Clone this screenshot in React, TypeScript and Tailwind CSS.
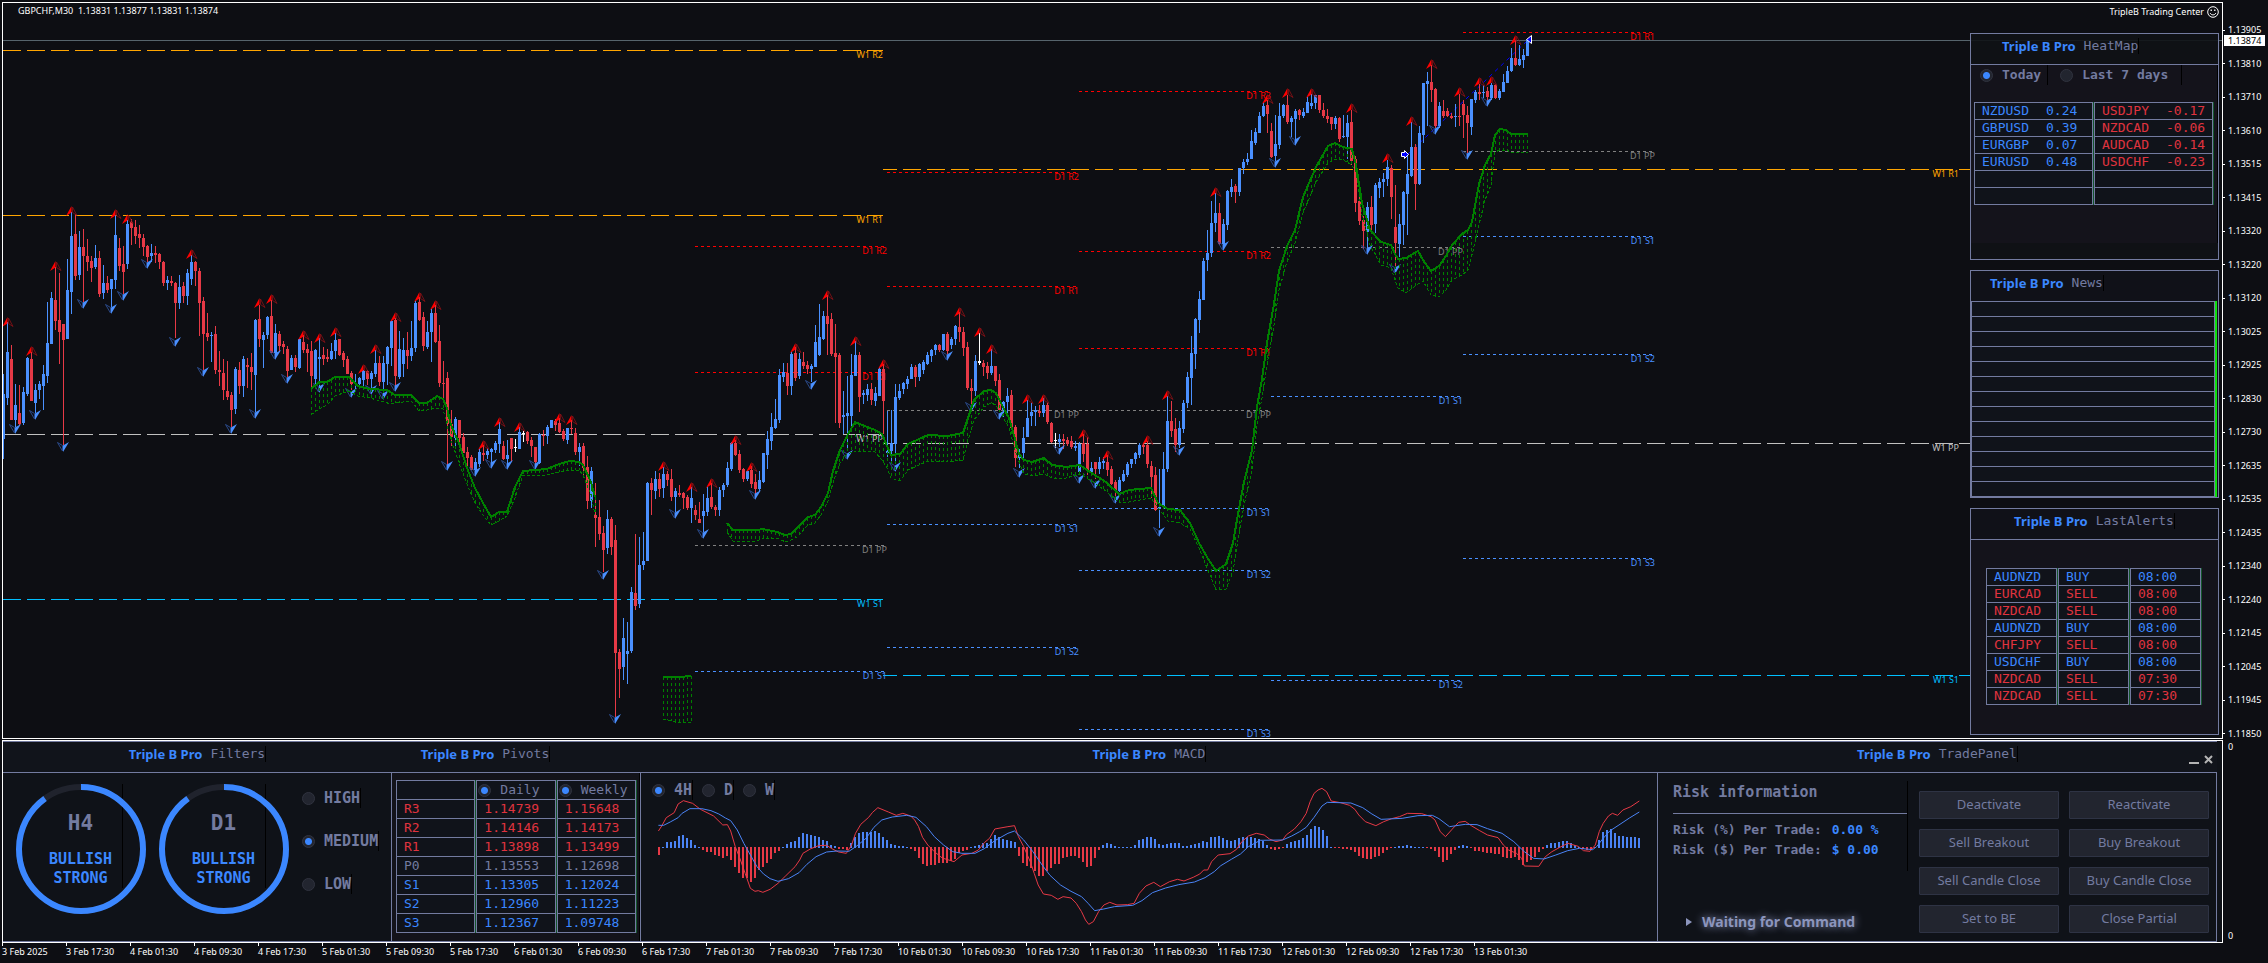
import React from "react";

type Side = "B" | "R" | "W";
type Candle = { i: number; high: number; low: number; top: number; bottom: number; side: Side };

const CANDLE_COLOR: Record<Side, string> = { B: "#4a90ff", R: "#e63946", W: "#ffffff" };
const SANS = "font-['Noto_Sans','Open_Sans',sans-serif]";
const MONO = "font-['DejaVu_Sans_Mono','Liberation_Mono',monospace]";

// Each block: index of its first candle, top offset, units per pixel, then "high low open/close side".
const BLOCKS: { start: number; y: number; unit: number; rows: string }[] = [
  {
    start: 0, y: 190, unit: 3,
    rows: "552 806 612 747 B,395 644 486 624 B,465 690 507 690 R,582 712 645 690 B,585 708 669 702 R,591 705 606 699 B,500 618 504 612 B,486 633 507 633 R,582 668 600 639 B,573 627 582 600 B,525 660 552 588 B,336 579 459 558 B,306 462 324 462 B,230 420 330 393 R,249 522 390 426 R,402 765 402 450 R,207 447 300 447 B,65 372 138 306 B,72 270 132 258 R,123 270 171 255 B,117 335 171 198 R,147 243 198 216 R,198 276 213 234 R,165 237 204 231 B,183 321 204 312 R,225 327 279 309 B,258 309 279 300 R,267 350 267 297 B,75 297 135 270 B,144 243 174 228 R,168 312 222 246 R,90 237 102 222 B,87 165 96 114 R,90 162 111 138 R,105 174 132 144 R,132 198 144 171 R,165 216 168 201 R,162 216 189 198 B,168 219 189 195 R,189 237 192 216 R,213 288 216 279 R,258 300 270 279 B,258 288 273 279 R,276 445 279 339 R,255 357 291 339 B,276 339 288 318 R,237 345 249 318 B,195 285 216 267 B,213 288 216 243 R,234 438 243 339 R,321 540 333 432 R,369 453 429 441 R,426 516 435 438 B,408 552 432 540 R,483 588 540 546 R,507 630 549 600 R,513 630 603 621 R,606 710 615 660 R,531 672 537 657 B,516 612 540 588 R,498 621 507 588 B,504 594 525 531 R,489 600 531 546 R,387 665 390 555 B,345 471 387 447 R,426 534 435 450 B,378 447 381 435 B,330 489 378 489 R,402 495 429 489 B,423 486 432 468 R,453 492 462 471 R,468 560 477 543 R,495 540 504 540 B,495 546 504 531 R,447 537 447 534 B,435 489 456 480 R,462 546 477 489 R,453 600 483 558 R,477 582 480 567 B,445 595 501 507 B,471 525 495 507 R,477 516 501 507 R,459 510 483 507 B,430 507 450 483 B,447 498 447 495 R,483 531 489 510 R,498 552 507 552 R,543 600 549 582 R,552 597 579 582 B,561 588 564 582 B,540 588 543 570 B,540 585 543 567 R,543 600 549 567 B,480 561 519 552 B,498 588 519 576 R,498 615 519 576 B,468 585 471 522 B,390 528 393 474 B,385 590 390 558 R,423 567 477 561 B,444 561 480 522 B,426 537 480 498 R,393 513 474 498 B,333 486 339 474 B,320 393 336 390 R,366 483 381 468 R,393 477 426 471 B,357 516 369 426 B,345 459 369 456 R,405 591 453 579 R,513 624 579 582 R,546 825 564 702 R,660 768 702 741 R,681 771 687 744 B",
  },
  {
    start: 114, y: 380, unit: 3,
    rows: "120 201 120 174 R,159 219 171 219 R,201 264 216 234 R,225 270 231 270 R,234 280 246 270 B,207 262 216 252 B,195 243 219 225 R,204 237 213 225 B,204 250 207 216 B,183 219 189 210 B,125 219 147 192 B,183 240 198 237 R,180 255 225 237 B,174 246 174 207 R,177 216 200 203 W,140 207 156 207 B,153 186 158 162 W,153 192 156 183 R,171 231 180 198 R,201 260 201 246 R,159 252 162 249 B,150 198 165 168 R,135 192 141 168 B,120 144 120 144 B,117 153 123 135 R,115 159 129 156 R,147 183 153 177 R,144 192 144 180 B,120 162 144 147 R,144 225 159 216 R,189 258 201 216 B,189 294 198 264 R,228 387 261 363 R,261 384 273 363 B,309 501 405 414 R,360 480 411 462 R,438 575 459 510 R,390 522 417 504 B,411 525 417 501 R,435 1010 480 819 R,807 954 816 867 R,714 900 774 861 B,726 912 813 822 B,621 819 636 813 B,462 690 639 678 R,471 684 555 672 B,456 570 543 555 B,306 543 309 543 B,294 405 309 330 R,273 357 297 333 B,279 351 297 327 R,260 354 282 324 B,273 318 282 300 R,267 363 297 351 R,324 395 333 351 B,315 351 339 345 R,336 387 339 354 R,345 390 351 384 R,320 429 354 384 B,375 420 390 405 R,366 429 417 429 R,342 455 393 408 B,321 408 354 396 B,308 387 351 381 R,375 408 381 390 R,321 408 330 390 B,309 351 315 330 B,246 321 264 315 B,186 273 189 267 B,180 228 189 225 R,210 279 222 270 R,264 306 267 297 R,270 303 273 297 B,258 324 270 312 R,282 345 306 327 R,273 336 300 327 B,219 309 219 306 B,153 267 177 225 B,99 210 141 183 B",
  },
  {
    start: 193, y: 200, unit: 2.8,
    rows: "558 640 612 637 B,472 624 490 615 B,455 510 482 496 B,456 546 484 521 R,426 546 431 521 B,412 507 429 498 R,428 501 445 493 B,426 473 453 464 R,451 487 462 473 R,459 510 464 473 B,350 467 398 467 B,291 437 384 434 B,311 392 325 389 B,265 434 325 348 R,317 437 333 431 R,347 624 428 440 R,428 637 434 624 R,535 655 602 607 B,493 703 597 605 B,432 635 490 605 B,396 493 434 493 B,426 594 434 552 R,532 572 541 546 B,515 563 529 546 B,513 574 529 560 R,524 577 541 563 B,468 549 473 549 B,460 655 473 563 R,591 719 704 707 B,588 730 680 704 B,515 735 552 683 B,515 560 535 554 B,510 543 513 529 B,493 529 501 515 B,459 501 468 501 B,462 524 467 496 R,456 507 459 496 B,448 487 454 476 B,425 462 434 459 B,417 454 420 437 B,403 434 406 420 B,403 426 406 420 R,375 423 375 420 B,370 430 375 423 R,384 417 389 406 B,350 406 353 389 B,313 398 356 370 R,356 437 370 414 R,398 532 412 526 R,501 575 526 535 R,434 549 451 535 B,372 462 451 455 W,448 493 456 467 R,454 501 465 484 R,418 490 465 484 B,465 521 465 507 R,487 594 504 588 R,562 608 566 588 B,526 598 549 566 B,532 644 546 638 R,630 747 636 722 R,697 750 715 722 B,636 725 666 708 B,560 663 610 663 B,568 633 594 605 B,577 633 589 594 B,574 608 591 596 R,555 608 574 596 B,568 627 574 622 R,622 680 624 678 R,652 694 672 676 W,655 692 669 678 B,655 697 669 675 R,664 689 672 683 R,661 697 675 692 R,675 703 689 694 B,678 770 683 762 B,655 734 680 711 R,664 770 683 756 R,734 764 750 762 B,734 780 734 753 R,720 767 734 753 B",
  },
  {
    start: 275, y: 0, unit: 2.613,
    rows: "1195 1225 1205 1209 B,1190 1245 1207 1228 R,1217 1268 1226 1265 R,1255 1300 1260 1283 R,1247 1286 1254 1283 B,1228 1260 1239 1257 B,1207 1247 1213 1242 B,1199 1223 1200 1213 B,1181 1213 1184 1200 B,1158 1197 1163 1189 B,1160 1187 1163 1168 R,1152 1223 1163 1213 R,1205 1300 1217 1247 R,1220 1335 1241 1333 R,1226 1380 1325 1330 B,1180 1330 1226 1326 B,1035 1233 1100 1226 B,1048 1143 1100 1125 R,1092 1180 1121 1163 R,1100 1170 1118 1163 B,1045 1132 1053 1120 B,972 1065 985 1053 B,878 1058 923 988 B,830 965 834 925 B,760 870 782 836 B,673 783 682 783 B,601 707 660 679 B,525 672 583 661 B,505 605 557 583 B,531 640 557 637 R,573 640 586 637 B,496 600 499 588 B,468 515 488 502 B,481 531 486 502 R,438 512 440 502 B,416 455 422 438 B,401 430 416 424 B,340 416 368 416 B,335 380 345 374 B,293 348 303 348 B,267 305 277 303 B,260 348 274 298 R,321 414 342 409 R,301 420 376 408 B,270 390 303 378 B,272 308 274 303 B,248 325 274 319 R,303 358 308 319 B,285 368 290 310 B,285 314 287 301 R,282 308 293 303 B,253 295 267 295 B,245 285 269 277 B,248 285 248 270 B,248 295 248 287 R,269 308 287 303 R,285 322 303 311 R,306 340 306 324 R,303 337 308 324 B,306 371 308 363 R,301 361 355 358 B,300 415 321 358 B,287 430 319 421 R,408 554 416 531 R,505 588 525 578 R,565 650 575 604 R,528 650 541 606 B,512 601 541 588 R,478 609 483 586 B,465 518 475 491 B,452 515 468 475 B,418 486 436 468 B,430 572 438 515 R,483 700 593 635 R,560 672 586 638 B,499 640 502 588 B,402 614 455 507 B,318 463 384 460 B,376 549 384 481 R,329 484 348 481 B,216 374 217 353 B,188 329 212 219 B,170 267 214 235 R,230 335 233 329 R,267 335 277 329 B,262 308 290 303 R,282 306 290 303 R,295 311 303 308 R,272 332 302 306 B,245 329 302 306 R,261 361 272 301 R,277 400 301 321 R,259 353 259 332 B,235 269 240 262 B,220 262 240 245 R,222 256 240 243 B,227 262 238 253 R,217 260 222 256 B,219 258 222 256 R,233 262 238 256 B,193 240 214 240 B,172 217 185 217 B,125 188 152 185 B,108 172 152 170 R,118 172 154 170 B,128 178 144 157 B,103 146 105 146 B",
  },
];

const CANDLES: Candle[] = BLOCKS.flatMap((b) =>
  b.rows.split(",").map((row, k) => {
    const p = row.split(" ");
    const at = (n: number) => Math.round(b.y + Number(p[n]) / b.unit);
    return { i: b.start + k, high: at(0), low: at(1), top: at(2), bottom: at(3), side: p[4] as Side };
  }),
);

const pairs = (s: string) => s.split(" ").map((p) => p.split(",").map(Number));

const PEAKS = pairs(
  "1,317 7,346 13,261 17,206 28,209 31,214 47,249 64,298 67,294 75,330 79,333 83,327 90,364 93,344 98,312 104,292 108,300 120,440 124,417 129,422 139,413 142,415 165,461 172,482 177,478 183,435 187,462 198,343 206,290 213,336 220,359 239,307 244,327 247,344 256,394 260,394 270,429 276,450 286,435 291,390 303,187 316,94 321,88 327,88 337,103 346,153 352,116 357,59 364,87 369,77 372,76 378,35",
);
const TROUGHS = pairs(
  "3,434 8,420 15,452 20,309 27,314 30,301 36,269 43,347 50,377 57,434 63,419 68,360 71,384 79,393 87,398 92,395 95,400 98,392 111,471 118,477 122,469 126,470 133,470 150,580 153,724 168,519 175,539 188,500 202,390 211,460 223,472 236,361 242,412 249,420 254,478 264,455 269,484 273,489 278,504 289,537 294,456 305,251 318,168 323,146 341,255 348,274 358,135 366,160 371,107",
);

// x, upper edge, lower edge
const RIBBONS = [
  "311,389,415 319,382,409 327,382,405 335,377,396 349,377,391 358,386,396 370,389,398 387,390,403 395,395,403 411,395,401 419,403,411 427,403,410 437,396,408 443,399,409 447,408,425 451,425,440 459,443,463 467,468,484 475,488,503 483,503,515 491,517,525 499,512,521 507,512,516 515,487,498 523,471,475 547,469,475 559,464,472 570,461,470 579,462,470 583,465,475 591,482,495 595,497,515",
  "663,677,719 671,677,721 675,677,722 683,677,722 687,676,722 691,676,722",
  "727,523,532 733,530,541 757,530,541 763,529,538 777,532,538 785,535,542 791,534,540 797,528,537 808,517,525 815,515,523 821,507,515 828,493,501 833,471,483 840,450,463 847,436,454 855,422,451 867,427,451 875,430,452 882,434,460 887,446,468 891,455,478 900,454,481 908,444,470 928,435,461 947,436,462 963,433,460 968,418,440 974,400,420 984,391,407 991,390,403 996,393,405 1003,407,417 1009,418,428 1015,439,450 1019,454,462 1024,460,474 1032,462,476 1044,458,474 1052,465,478 1066,467,478 1080,465,474 1090,472,480 1106,482,491 1119,494,503 1129,490,502 1151,488,498 1158,503,508 1168,509,521 1180,510,523 1190,523,529 1199,543,548 1207,557,568 1216,571,590 1226,564,589 1233,543,572 1238,514,540 1244,482,505 1252,450,470 1257,407,425 1262,379,398 1267,343,365 1274,304,325 1279,271,290 1287,246,262 1295,230,243 1303,197,213 1316,167,182 1328,146,163 1335,143,159 1343,147,160 1352,149,165 1356,165,172 1362,203,215 1370,230,245 1381,242,265 1391,245,268 1395,254,280 1398,259,288 1406,258,293 1418,251,284 1423,260,281 1431,271,295 1439,266,297 1446,256,290 1452,245,280 1462,234,275 1468,230,270 1472,222,255 1479,184,225 1485,165,200 1491,154,185 1495,135,152 1500,129,150 1506,130,150 1511,134,152 1528,134,152",
].map(pairs);

type Level = [string, number, string];
const ORANGE = "#ffa500", SILVER = "#c0c0c0", SKY = "#00bfff", RED = "#ff0000", GRAY = "#808080", BLUE = "#4a90ff";
const WEEKLY: { x1: number; x2: number; label: number; levels: Level[] }[] = [
  { x1: 3, x2: 883, label: 883, levels: [["W1 R2", 50, ORANGE], ["W1 R1", 215, ORANGE], ["W1 PP", 434, SILVER], ["W1 S1", 599, SKY]] },
  { x1: 883, x2: 1970, label: 1959, levels: [["W1 R1", 169, ORANGE], ["W1 PP", 443, SILVER], ["W1 S1", 675, SKY]] },
];
const DAILY: { x: number; levels: Level[] }[] = [
  { x: 695, levels: [["D1 R2", 246, RED], ["D1 R1", 372, RED], ["D1 PP", 545, GRAY], ["D1 S1", 671, BLUE]] },
  { x: 887, levels: [["D1 R2", 172, RED], ["D1 R1", 286, RED], ["D1 PP", 410, GRAY], ["D1 S1", 524, BLUE], ["D1 S2", 647, BLUE]] },
  { x: 1079, levels: [["D1 R3", 91, RED], ["D1 R2", 251, RED], ["D1 R1", 348, RED], ["D1 PP", 410, GRAY], ["D1 S1", 508, BLUE], ["D1 S2", 570, BLUE], ["D1 S3", 729, BLUE]] },
  { x: 1271, levels: [["D1 PP", 247, GRAY], ["D1 S1", 396, BLUE], ["D1 S2", 680, BLUE]] },
  { x: 1463, levels: [["D1 R1", 32, RED], ["D1 PP", 151, GRAY], ["D1 S1", 236, BLUE], ["D1 S2", 354, BLUE], ["D1 S3", 558, BLUE]] },
];

function ribbonAt(r: number[][], x: number) {
  for (let k = 1; k < r.length; k++) {
    if (x <= r[k][0]) {
      const [x0, u0, l0] = r[k - 1];
      const [x1, u1, l1] = r[k];
      const t = (x - x0) / (x1 - x0);
      return [u0 + (u1 - u0) * t, l0 + (l1 - l0) * t];
    }
  }
  return [r[r.length - 1][1], r[r.length - 1][2]];
}

function Ribbon({ points }: { points: number[][] }) {
  const first = points[0][0];
  const last = points[points.length - 1][0];
  const xs: number[] = [];
  for (let x = first; x <= last; x += 4) xs.push(x);
  return (
    <g stroke="#008000" fill="none" shapeRendering="crispEdges">
      {xs.map((x) => {
        const [u, l] = ribbonAt(points, x);
        return <line key={x} x1={x + 0.5} x2={x + 0.5} y1={Math.round(u)} y2={Math.round(l)} strokeDasharray="3 3" />;
      })}
      <polyline points={points.map((p) => `${p[0]},${p[2]}`).join(" ")} strokeDasharray="3 2" />
      <polyline points={points.map((p) => `${p[0]},${p[1]}`).join(" ")} strokeWidth="2" />
    </g>
  );
}

function PriceChart() {
  return (
    <svg className="absolute inset-0 h-full w-full" role="img" aria-label="GBPCHF price chart">
      <g transform="translate(-3 -3)">
        <rect x="3" y="40" width="100%" height="1" fill="#56646c" />
        {WEEKLY.map((w) =>
          w.levels.map(([name, y, color]) => (
            <g key={w.x1 + name}>
              <line x1={w.x1} x2={w.x2} y1={y + 0.5} y2={y + 0.5} stroke={color} strokeDasharray="18 6" strokeDashoffset={w.x1 === 3 ? 0 : 4} />
              <text x={w.label} y={y + 8} fill={color} textAnchor="end" className={`text-[9px] ${SANS}`}>{name}</text>
            </g>
          )),
        )}
        {DAILY.map((d) =>
          d.levels.map(([name, y, color]) => (
            <g key={d.x + name}>
              <line x1={d.x} x2={d.x + 190} y1={y + 0.5} y2={y + 0.5} stroke={color} strokeDasharray="3 3" />
              <text x={d.x + 192} y={y + 8} fill={color} textAnchor="end" className={`text-[9px] ${SANS}`}>{name}</text>
            </g>
          )),
        )}
        <line x1="1408" y1="154" x2="1527" y2="41" stroke="#0000ff" strokeDasharray="4 4" />
        {CANDLES.map((c) => (
          <g key={c.i} fill={CANDLE_COLOR[c.side]}>
            <rect x={3 + c.i * 4} y={c.high} width="1" height={Math.max(1, c.low - c.high)} />
            <rect x={2 + c.i * 4} y={c.top} width="3" height={Math.max(1, c.bottom - c.top)} />
          </g>
        ))}
        {PEAKS.map(([i, y]) => (
          <g key={i} transform={`translate(${i * 4 + 3.5} ${y})`}>
            <path d="M0 0V6.500L-5.500 10Z" fill="#ff0000" />
            <path d="M1 1L5.500 9.500L1 6.500Z" fill="none" stroke="#8b1015" strokeWidth="0.8" />
          </g>
        ))}
        {TROUGHS.map(([i, y]) => (
          <g key={i} transform={`translate(${i * 4 + 3} ${y})`}>
            <path d="M0 0V-6.500L6 -10Z" fill="#4a90ff" />
            <path d="M-0.500 -1L-5.500 -9.500L-0.500 -6.500Z" fill="none" stroke="#2c4f95" strokeWidth="0.9" />
          </g>
        ))}
        {RIBBONS.map((r) => <Ribbon key={r[0][0]} points={r} />)}
        <path d="M1401.500 152.500H1404.500V150.500L1408.500 154.500L1404.500 158.500V156.500H1401.500Z" fill="#0000ff" stroke="#fff" />
        <path d="M1531.500 35.500V43.500L1526.500 39.500Z" fill="#0000ff" stroke="#fff" />
      </g>
    </svg>
  );
}

function Title({ name, className = "" }: { name: string; className?: string }) {
  return (
    <h2 className={`flex items-center gap-2 whitespace-nowrap ${className}`}>
      <span className={`${SANS} text-[13px] leading-4 font-bold text-[#3b87ff]`}>Triple B Pro</span>
      <span className={`${MONO} border-r border-black text-[13px] leading-4 text-[#737ba0]`}>{name}</span>
    </h2>
  );
}

type RadioProps = { name: string; label: string; checked?: boolean; type?: string; className: string };
function Choice({ name, label, checked, type = "radio", className }: RadioProps) {
  return (
    <label className={`flex items-center gap-[9px] whitespace-nowrap text-[#737ba0] ${MONO} ${className}`}>
      <input
        type={type}
        name={name}
        defaultChecked={checked}
        className="size-[13px] shrink-0 appearance-none rounded-full border border-[#30333f] bg-[#22252f] checked:bg-[radial-gradient(circle,#3b87ff_3px,#22252f_4px)]"
      />
      {label}
    </label>
  );
}

const TONE: Record<string, string> = { up: "text-[#3b87ff]", down: "text-[#e0333f]", flat: "text-[#737ba0]" };
const CELL = "border-r border-b border-l border-[#737ba0] bg-[#10131a] shadow-[1px_0_0_#14562c] p-0 pl-[7px] text-left font-normal";

const HEAT: [string, string, string, string][] = [
  ["NZDUSD", "0.24", "USDJPY", "-0.17"],
  ["GBPUSD", "0.39", "NZDCAD", "-0.06"],
  ["EURGBP", "0.07", "AUDCAD", "-0.14"],
  ["EURUSD", "0.48", "USDCHF", "-0.23"],
  ["", "", "", ""],
  ["", "", "", ""],
];

function HeatMap() {
  return (
    <section className="h-[227px] border border-[#737ba0] bg-[#101216]/90">
      <header className="flex h-[31px] items-center border-b border-[#737ba0] pb-[6px] pl-[31px]"><Title name="HeatMap" /></header>
      <div className="h-[178px] border-r border-black bg-[#14131b]">
        <div className="flex h-5 items-center gap-3 pl-[9px]">
          <Choice name="range" label="Today" checked className="border-r border-black pr-[6px] text-[13px] leading-5 font-bold" />
          <Choice name="range" label="Last 7 days" className="border-r border-black pr-[13px] text-[13px] leading-5 font-bold" />
        </div>
        <table className={`mx-[2px] mt-[17px] w-[241px] table-fixed border-separate border-spacing-x-[1px] border-spacing-y-0 ${MONO} text-[13px] leading-4`}>
          <tbody>
            {HEAT.map((r, k) => (
              <tr key={k} className="h-[17px]">
                <td className={`${CELL} ${k === 0 ? "border-t" : ""} ${TONE.up}`}><span className="inline-block w-16 whitespace-nowrap">{r[0]}</span>{r[1]}</td>
                <td className={`${CELL} ${k === 0 ? "border-t" : ""} ${TONE.down}`}><span className="inline-block w-16 whitespace-nowrap">{r[2]}</span>{r[3]}</td>
              </tr>
            ))}
          </tbody>
        </table>
      </div>
    </section>
  );
}

function News() {
  return (
    <section className="h-[228px] border border-[#737ba0] bg-[#101118]">
      <header className="flex h-[30px] items-center pb-[6px] pl-[19px]"><Title name="News" /></header>
      <div className="mr-px border-r-2 border-[#12e012]">
        <ul className="border-x border-t border-[#737ba0] bg-[#10131a]">
          {Array.from({ length: 13 }, (_, k) => <li key={k} className="h-[15px] border-b border-[#737ba0]" />)}
        </ul>
      </div>
    </section>
  );
}

const ALERTS: [string, string, string][] = [
  ["AUDNZD", "BUY", "08:00"], ["EURCAD", "SELL", "08:00"], ["NZDCAD", "SELL", "08:00"], ["AUDNZD", "BUY", "08:00"],
  ["CHFJPY", "SELL", "08:00"], ["USDCHF", "BUY", "08:00"], ["NZDCAD", "SELL", "07:30"], ["NZDCAD", "SELL", "07:30"],
];

function LastAlerts() {
  return (
    <section className="h-[227px] border border-[#737ba0] bg-[#14131b]">
      <header className="flex h-[31px] items-center justify-center border-b border-[#737ba0] bg-[#101118] pb-[6px]"><Title name="LastAlerts" /></header>
      <table className={`mt-7 ml-[14px] w-[217px] table-fixed border-separate border-spacing-x-[1px] border-spacing-y-0 ${MONO} text-[13px] leading-4`}>
        <tbody>
          {ALERTS.map((r, k) => (
            <tr key={k} className={`h-[17px] ${r[1] === "BUY" ? TONE.up : TONE.down}`}>
              {r.map((v, c) => <td key={c} className={`${CELL} ${k === 0 ? "border-t" : ""}`}>{v}</td>)}
            </tr>
          ))}
        </tbody>
      </table>
    </section>
  );
}

const PRICES = "1.13905 1.13810 1.13710 1.13610 1.13515 1.13415 1.13320 1.13220 1.13120 1.13025 1.12925 1.12830 1.12730 1.12635 1.12535 1.12435 1.12340 1.12240 1.12145 1.12045 1.11945 1.11850".split(" ");

const DAYS = ["4", "5", "6", "7", "10", "11", "12"];
const TIMES = ["3 Feb 2025", "3 Feb 17:30", ...DAYS.flatMap((d) => ["01:30", "09:30", "17:30"].map((t) => `${d} Feb ${t}`)), "13 Feb 01:30"];

function Gauge({ frame }: { frame: string }) {
  const length = 2 * Math.PI * 62;
  return (
    <div className={`relative size-[130px] text-center font-bold ${MONO}`}>
      <svg viewBox="0 0 130 130" className="absolute inset-0 -rotate-90">
        <circle cx="65" cy="65" r="62" fill="none" stroke="#20232d" strokeWidth="6" />
        <circle cx="65" cy="65" r="62" fill="none" stroke="#3b87ff" strokeWidth="6" strokeDasharray={`${length * 0.9} ${length}`} />
      </svg>
      <div className="mr-[23px] ml-[23px] h-[104px] border-r border-black pt-[26px]">
        <p className="text-[21px] leading-[26px] text-[#737ba0]">{frame}</p>
        <p className="pt-[14px] text-[15px] leading-[19px] text-[#3b87ff]">BULLISH<br />STRONG</p>
      </div>
    </div>
  );
}

function Filters() {
  return (
    <div className="flex gap-[13px] pt-[11px] pl-[13px]">
      <Gauge frame="H4" />
      <Gauge frame="D1" />
      <div className="flex flex-col items-start gap-[23px] pt-1">
        {["HIGH", "MEDIUM", "LOW"].map((l) => (
          <Choice key={l} name="strength" label={l} checked={l === "MEDIUM"} className="border-r border-black text-[15px] leading-5 font-bold" />
        ))}
      </div>
    </div>
  );
}

const PIVOTS: [string, string, string, string][] = [
  ["R3", "1.14739", "1.15648", "down"], ["R2", "1.14146", "1.14173", "down"], ["R1", "1.13898", "1.13499", "down"],
  ["P0", "1.13553", "1.12698", "flat"], ["S1", "1.13305", "1.12024", "up"], ["S2", "1.12960", "1.11223", "up"], ["S3", "1.12367", "1.09748", "up"],
];

function Pivots() {
  return (
    <div className="h-full border-r border-black bg-[#13131a] pt-[7px] pl-[3px]">
      <table className={`w-[242px] table-fixed border-separate border-spacing-x-[1px] border-spacing-y-0 ${MONO} text-[13px] leading-4`}>
        <thead>
          <tr className="h-[20px]">
            <th className={`${CELL} border-t`} aria-label="Level" />
            {["Daily", "Weekly"].map((l) => (
              <th key={l} className="border border-[#737ba0] bg-[#10131a] p-0 pl-[1px] text-left font-normal shadow-[1px_0_0_#14562c]">
                <Choice type="checkbox" name={l} label={l} checked className="text-[13px] leading-4" />
              </th>
            ))}
          </tr>
        </thead>
        <tbody>
          {PIVOTS.map(([n, d, w, tone]) => (
            <tr key={n} className={`h-[19px] ${TONE[tone]}`}>
              <td className={CELL}>{n}</td><td className={CELL}>{d}</td><td className={CELL}>{w}</td>
            </tr>
          ))}
        </tbody>
      </table>
    </div>
  );
}

const HISTOGRAM = "-8 1 6 6 7 12 13 10 8 3 1 -3 -5 -5 -8 -9 -11 -9 -13 -20 -26 -31 -31 -35 -31 -23 -20 -16 -12 -6 -4 1 4 6 7 11 15 14 13 12 11 8 7 3 2 -2 -2 -3 5 11 15 16 16 16 17 15 11 8 4 3 2 2 1 -2 -4 -11 -17 -19 -18 -18 -16 -16 -16 -14 -12 -6 -4 -3 1 2 3 5 5 9 13 11 9 8 7 6 -9 -16 -19 -21 -24 -29 -29 -24 -21 -17 -17 -11 -10 -9 -9 -11 -15 -20 -19 -11 -3 3 5 4 2 1 1 1 1 3 8 9 11 11 9 4 3 4 5 5 5 2 2 3 4 5 7 6 11 11 12 10 8 7 8 10 11 11 11 10 9 7 3 -2 -3 -2 -1 4 6 7 8 10 13 19 22 21 18 12 1 -1 -1 -2 -2 -3 -5 -9 -11 -12 -12 -10 -9 -6 -3 -1 1 2 2 3 2 1 1 1 -1 -2 -4 -10 -15 -13 -7 -3 2 3 2 -1 -4 -4 -5 -6 -6 -7 -7 -10 -11 -11 -10 -13 -18 -15 -13 -10 -5 -2 3 5 5 6 7 7 5 3 1 -2 -3 -3 -1 8 16 18 19 15 12 12 11 11 11 10".split(" ").map(Number);

function Macd() {
  return (
    <div className="relative h-full pt-[7px] pl-[11px]">
      <svg className="absolute inset-0 h-full w-full" role="img" aria-label="MACD">
        {HISTOGRAM.map((v, k) => (
          <rect key={k} x={17 + k * 4} y={v > 0 ? 75 - v : 74} width="2" height={Math.abs(v)} fill={v > 0 ? "#4a83f5" : "#e63946"} />
        ))}
        <g transform="scale(0.657 0.3333) translate(-1.5 -129)" fill="none">
          <polyline vectorEffect="non-scaling-stroke" stroke="#e63946" points="28,303 33,288 40,263 52,248 58,222 66,212 80,220 92,238 112,258 126,285 133,284 138,303 145,350 152,385 160,430 168,475 175,484 180,482 187,487 198,478 210,460 222,437 236,410 243,390 248,370 260,356 272,347 284,346 292,356 302,366 314,370 322,345 328,310 336,283 348,262 354,247 362,233 378,246 390,256 400,250 412,258 418,270 424,290 430,322 438,345 448,365 460,384 478,395 490,375 505,370 515,360 524,338 532,325 540,297 560,290 570,287 576,320 584,350 594,395 600,430 606,465 614,492 626,496 636,508 644,500 656,504 664,520 672,545 678,570 683,583 690,575 698,545 706,525 715,517 726,525 742,524 752,520 760,490 770,468 782,457 792,470 806,455 818,448 828,453 842,442 852,432 858,420 864,420 870,395 880,375 898,371 908,358 916,335 926,318 938,310 950,315 958,327 968,335 978,330 984,314 996,297 1006,275 1014,250 1020,215 1026,190 1032,180 1038,175 1045,185 1052,213 1066,218 1080,226 1088,238 1094,255 1104,275 1120,287 1132,275 1144,266 1156,260 1168,250 1190,251 1204,260 1210,270 1218,305 1226,320 1236,298 1246,277 1256,274 1266,288 1278,302 1290,315 1306,323 1314,345 1322,360 1334,370 1342,385 1346,408 1368,409 1378,380 1388,365 1400,352 1412,340 1428,349 1436,362 1446,364 1454,345 1460,305 1466,280 1474,258 1480,250 1488,256 1496,240 1508,230 1521,213" />
          <polyline vectorEffect="non-scaling-stroke" stroke="#4a83f5" points="28,286 36,286 46,276 58,263 64,250 76,236 94,236 108,242 120,252 130,264 138,272 148,300 158,340 168,375 178,410 188,432 198,446 210,454 226,446 242,428 254,403 268,380 284,366 300,363 318,364 330,348 344,325 356,292 368,270 384,261 406,256 420,262 436,290 448,320 462,345 476,365 490,370 510,370 524,356 540,332 560,310 570,303 584,330 598,365 612,405 624,436 640,465 656,484 672,500 682,520 692,542 706,537 722,530 750,526 764,512 780,488 800,474 820,464 844,456 860,443 874,425 884,407 900,388 914,372 926,350 944,331 978,330 992,318 1004,305 1014,292 1026,262 1038,228 1046,217 1082,219 1100,233 1114,252 1128,268 1160,265 1184,257 1206,256 1216,266 1232,290 1256,283 1274,284 1290,296 1312,310 1330,335 1346,365 1360,385 1376,387 1394,375 1412,362 1430,355 1450,359 1456,350 1466,325 1476,303 1490,285 1506,264 1521,246" />
        </g>
      </svg>
      <div className="relative flex gap-[9px]">
        {["4H", "D", "W"].map((l) => (
          <Choice key={l} name="macd" label={l} checked={l === "4H"} className="border-r border-black text-[15px] leading-5 font-bold" />
        ))}
      </div>
    </div>
  );
}

const ACTIONS = ["Deactivate", "Reactivate", "Sell Breakout", "Buy Breakout", "Sell Candle Close", "Buy Candle Close", "Set to BE", "Close Partial"];

function TradePanel() {
  return (
    <div className="flex h-full justify-between pr-[7px] pl-[15px]">
      <div className={`flex w-[235px] flex-col ${MONO} text-[#737ba0]`}>
        <div className="mt-2 h-[90px] border-r border-black">
          <h3 className="h-[33px] border-b border-[#737ba0] pt-px text-[15px] leading-5 font-bold">Risk information</h3>
          <dl className="pt-[6px] text-[13px] leading-5 font-bold">
            <div className="flex gap-[10px]"><dt>Risk (%) Per Trade:</dt><dd className="text-[#3b87ff]">0.00 %</dd></div>
            <div className="flex gap-[10px]"><dt>Risk ($) Per Trade:</dt><dd className="text-[#3b87ff]">$ 0.00</dd></div>
          </dl>
        </div>
        <p className={`mt-auto flex items-center gap-[10px] pb-[9px] pl-[13px] ${SANS} text-[14px] leading-5 font-bold text-[#8c95bd] [text-shadow:0_0_8px_#8c95bd]`}>
          <svg width="6" height="8" viewBox="0 0 6 8" aria-hidden="true"><path d="M0 0L6 4L0 8Z" fill="#8c95bd" /></svg>
          Waiting for Command
        </p>
      </div>
      <div className="grid grid-cols-[140px_140px] content-start gap-[10px] pt-[18px]">
        {ACTIONS.map((a) => (
          <button key={a} type="button" className={`h-7 rounded-[1px] border border-[#2e3344] bg-[#22252f] text-[13px] text-[#737ba0] ${SANS}`}>{a}</button>
        ))}
      </div>
    </div>
  );
}

function Column({ name, size, shift = "", children, controls }: { name: string; size: string; shift?: string; children: React.ReactNode; controls?: React.ReactNode }) {
  return (
    <section className={`flex flex-col ${size}`}>
      <header className={`relative flex h-[31px] items-center justify-center border-b border-[#737ba0] bg-[#11141b] pb-[6px] ${shift}`}>
        <Title name={name} />
        {controls}
      </header>
      <div className="min-h-0 flex-1 border-r border-[#737ba0]">{children}</div>
    </section>
  );
}

export default function App() {
  return (
    <main className={`flex min-h-screen flex-col overflow-hidden bg-[#0d0e13] pt-[2px] pl-[2px] text-white ${SANS}`}>
      <div className="flex">
        <div className="relative h-[737px] flex-1 overflow-hidden border border-white">
          <PriceChart />
          <div className="relative flex h-full justify-between pr-[3px]">
            <p className="pt-[2px] pl-[15px] text-[9px] leading-3 whitespace-pre">{"GBPCHF,M30  1.13831 1.13877 1.13831 1.13874"}</p>
            <div className="flex w-[249px] flex-col pt-[3px]">
              <p className="flex items-center justify-end gap-[3px] text-[9px] leading-3">
                TripleB Trading Center
                <svg width="12" height="12" viewBox="0 0 12 12" fill="none" stroke="#fff" aria-hidden="true">
                  <circle cx="6" cy="6" r="5.300" />
                  <path d="M3.200 7C4 9.500 8 9.500 8.800 7" />
                  <path d="M4.200 3.500V5M7.800 3.500V5" strokeWidth="1.300" />
                </svg>
              </p>
              <div className="flex flex-col gap-[10px] pt-[15px]"><HeatMap /><News /><LastAlerts /></div>
            </div>
          </div>
        </div>
        <div className="relative w-[45px] text-[9px] leading-[10px]">
          <ol className="flex h-full flex-col justify-between pt-[23px]">
            {PRICES.map((p) => (
              <li key={p} className="flex items-center gap-[3px]"><span className="h-px w-[2px] bg-white" />{p}</li>
            ))}
          </ol>
          <span className="absolute top-[33px] left-px w-[41px] bg-white pl-1 leading-[11px] text-black">1.13874</span>
        </div>
      </div>

      <div className="mt-px flex">
        <div className="flex h-[203px] flex-1 border border-white bg-[#0f1218]">
          <div className="mr-[5px] flex min-w-0 flex-1 border-y border-[#737ba0]">
            <Column name="Filters" size="w-[389px]"><Filters /></Column>
            <Column name="Pivots" size="w-[249px]" shift="pr-[62px]"><Pivots /></Column>
            <Column name="MACD" size="min-w-0 flex-1"><Macd /></Column>
            <Column
              name="TradePanel"
              size="w-[559px]"
              controls={
                <div className="absolute right-1 bottom-2 flex items-end gap-[5px] text-[#b4b4b4]">
                  <button type="button" aria-label="Minimize" className="flex h-[9px] w-[10px] items-end"><span className="h-[2px] w-full bg-[#b4b4b4]" /></button>
                  <button type="button" aria-label="Close">
                    <svg width="9" height="9" viewBox="0 0 9 9" stroke="#b4b4b4" strokeWidth="2"><path d="M1 1L8 8M8 1L1 8" /></svg>
                  </button>
                </div>
              }
            >
              <TradePanel />
            </Column>
          </div>
        </div>
        <div className="flex w-[45px] flex-col justify-between py-[2px] pl-[5px] text-[9px] leading-[10px]">
          <span>0</span>
          <span>0</span>
        </div>
      </div>

      <ol className="flex h-5 text-[9px] leading-3">
        {TIMES.map((t) => (
          <li key={t} className="w-16 shrink-0 whitespace-nowrap">
            <span className="block h-[3px] w-px bg-white" />
            {t}
          </li>
        ))}
      </ol>
    </main>
  );
}
